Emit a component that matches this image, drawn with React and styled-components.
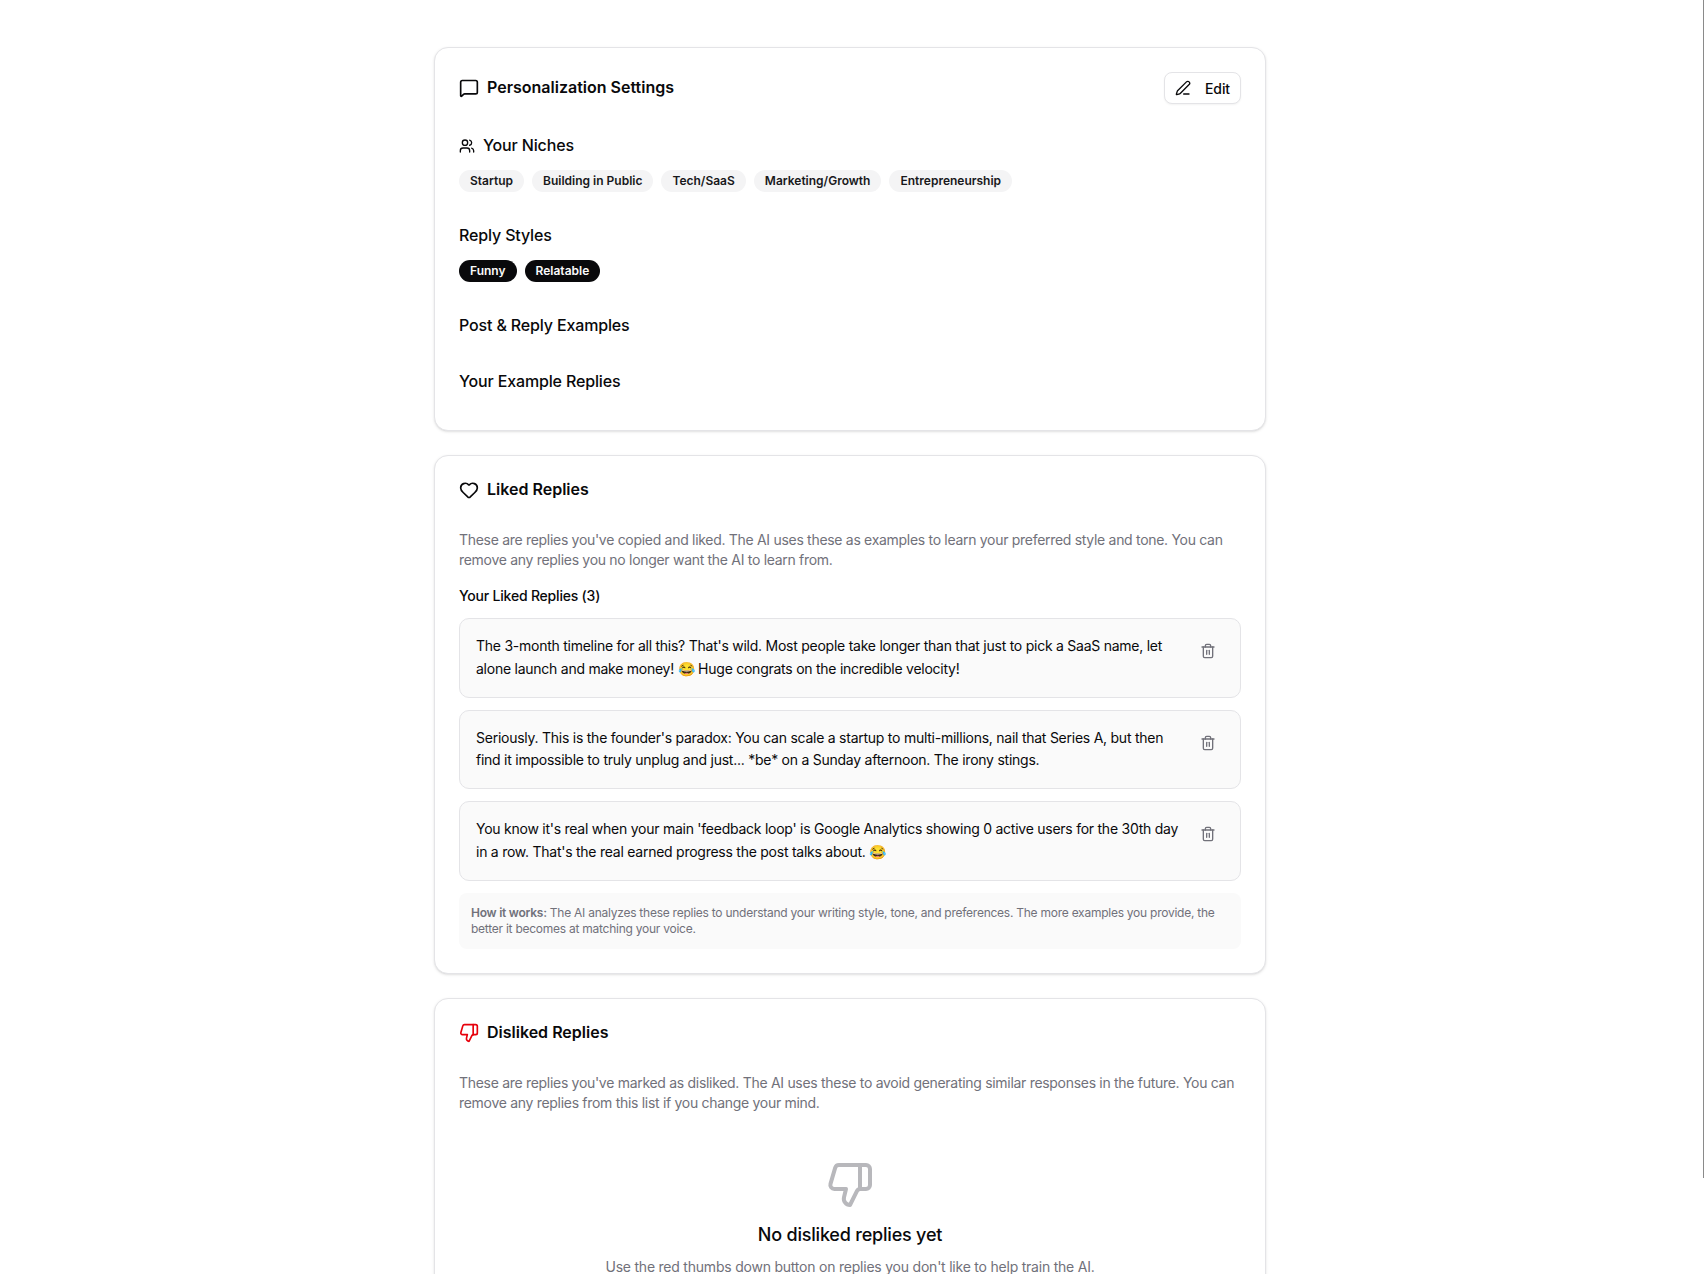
import React from 'react'
import styled, { createGlobalStyle } from 'styled-components'
import { MessageSquare, Users, PenLine, Heart, Trash2, ThumbsDown } from 'lucide-react'

const GlobalStyle = createGlobalStyle`
  html, body {
    margin: 0;
    padding: 0;
    background: #fff;
    height: 100%;
    overflow: hidden;
  }
  body {
    font-family: Inter, "Liberation Sans", sans-serif;
    color: #09090b;
  }
`

const Page = styled.div`
  width: 1700px;
  display: flex;
  flex-direction: column;
  align-items: center;
  gap: 24px;
  padding-top: 47px;
`

const ScrollThumb = styled.div`
  position: fixed;
  top: 0;
  right: 0;
  width: 1px;
  height: 1178px;
  background: #8a8a8a;
`

const Card = styled.section`
  box-sizing: border-box;
  width: 832px;
  padding: 24px;
  border: 1px solid #e4e4e7;
  border-radius: 14px;
  background: #fff;
  box-shadow: 0 1px 3px rgba(0, 0, 0, 0.1), 0 1px 2px -1px rgba(0, 0, 0, 0.1);
`

const CardHeader = styled.header`
  display: flex;
  align-items: center;
  justify-content: space-between;
  margin-bottom: 30px;
`

const CardTitle = styled.h2`
  display: flex;
  align-items: center;
  gap: 8px;
  margin: 0;
  font-size: 16px;
  line-height: 20px;
  font-weight: 600;

  span {
    line-height: 18px;
    padding-bottom: 2px;
  }
`

const EditButton = styled.button`
  display: flex;
  align-items: center;
  gap: 14px;
  box-sizing: border-box;
  width: 77px;
  height: 32px;
  padding: 0 10px;
  border: 1px solid #e4e4e7;
  border-radius: 8px;
  background: #fff;
  box-shadow: 0 1px 2px rgba(0, 0, 0, 0.05);
  color: #09090b;
  font: 500 14px Inter, sans-serif;
  letter-spacing: -0.1px;
`

const Section = styled.div`
  margin-top: ${p => p.$top || 0}px;
  margin-bottom: ${p => p.$bottom || 0}px;
`

const SectionLabel = styled.h3`
  display: flex;
  align-items: center;
  gap: 8px;
  margin: 0;
  font-size: 16px;
  line-height: 23px;
  padding-bottom: 1px;
  font-weight: 500;
  letter-spacing: -0.15px;
`

const Pills = styled.div`
  display: flex;
  gap: 8px;
  margin-top: 12px;
`

const Pill = styled.span`
  display: inline-flex;
  align-items: center;
  box-sizing: border-box;
  height: 22px;
  padding: 0 11px 2px;
  border-radius: 999px;
  background: ${p => (p.$dark ? '#09090b' : '#f4f4f5')};
  color: ${p => (p.$dark ? '#fafafa' : '#18181b')};
  font-size: 12px;
  font-weight: 600;
`

const Description = styled.p`
  margin: 0;
  font-size: 14px;
  line-height: 20px;
  letter-spacing: -0.3px;
  color: #71717a;
`

const EmptyHint = styled(Description)`
  letter-spacing: -0.22px;
`

const ListTitle = styled.h4`
  margin: 16px 0 12px;
  font-size: 14px;
  line-height: 20px;
  font-weight: 500;
  letter-spacing: -0.2px;
`

const ReplyList = styled.div`
  display: flex;
  flex-direction: column;
  gap: 12px;
`

const ReplyItem = styled.div`
  display: flex;
  align-items: flex-start;
  gap: 12px;
  padding: 16px;
  border: 1px solid #e4e4e7;
  border-radius: 10px;
  background: #fafafa;
`

const ReplyText = styled.p`
  flex: 1;
  margin: 0;
  font-size: 14px;
  line-height: 22.75px;
  letter-spacing: -0.25px;
`

const IconButton = styled.button`
  display: flex;
  flex: none;
  align-items: center;
  justify-content: center;
  width: 32px;
  height: 32px;
  padding: 0;
  border: 0;
  background: transparent;
  color: #71717a;
`

const HowItWorks = styled.p`
  margin: 12px 0 0;
  padding: 12px;
  border-radius: 8px;
  background: #fafafa;
  color: #71717a;
  font-size: 12px;
  line-height: 16px;
  letter-spacing: -0.25px;

  strong {
    font-weight: 600;
  }
`

const EmptyState = styled.div`
  display: flex;
  flex-direction: column;
  align-items: center;
  padding-top: 48px;
  text-align: center;
`

const EmptyIcon = styled(ThumbsDown)`
  color: #b8b8bc;
`

const EmptyTitle = styled.h3`
  margin: 12px 0 8px;
  font-size: 18px;
  line-height: 28px;
  font-weight: 500;
  letter-spacing: -0.2px;
`

const niches = ['Startup', 'Building in Public', 'Tech/SaaS', 'Marketing/Growth', 'Entrepreneurship']
const styles = ['Funny', 'Relatable']

const replies = [
  "The 3-month timeline for all this? That's wild. Most people take longer than that just to pick a SaaS name, let alone launch and make money! 😂 Huge congrats on the incredible velocity!",
  "Seriously. This is the founder's paradox: You can scale a startup to multi-millions, nail that Series A, but then find it impossible to truly unplug and just... *be* on a Sunday afternoon. The irony stings.",
  "You know it's real when your main 'feedback loop' is Google Analytics showing 0 active users for the 30th day in a row. That's the real earned progress the post talks about. 😂",
]

export default function App() {
  return (
    <>
      <GlobalStyle />
      <Page>
        <Card>
          <CardHeader>
            <CardTitle>
              <MessageSquare size={20} />
              <span>Personalization Settings</span>
            </CardTitle>
            <EditButton>
              <PenLine size={16} />
              Edit
            </EditButton>
          </CardHeader>
          <Section>
            <SectionLabel>
              <Users size={16} />
              Your Niches
            </SectionLabel>
            <Pills>
              {niches.map(n => (
                <Pill key={n}>{n}</Pill>
              ))}
            </Pills>
          </Section>
          <Section $top={32}>
            <SectionLabel>Reply Styles</SectionLabel>
            <Pills>
              {styles.map(s => (
                <Pill key={s} $dark>
                  {s}
                </Pill>
              ))}
            </Pills>
          </Section>
          <Section $top={32}>
            <SectionLabel>Post &amp; Reply Examples</SectionLabel>
          </Section>
          <Section $top={32} $bottom={12}>
            <SectionLabel>Your Example Replies</SectionLabel>
          </Section>
        </Card>

        <Card>
          <CardHeader>
            <CardTitle>
              <Heart size={20} />
              <span>Liked Replies</span>
            </CardTitle>
          </CardHeader>
          <Description>
            These are replies you've copied and liked. The AI uses these as examples to learn your preferred style and
            tone. You can remove any replies you no longer want the AI to learn from.
          </Description>
          <ListTitle>Your Liked Replies (3)</ListTitle>
          <ReplyList>
            {replies.map(r => (
              <ReplyItem key={r}>
                <ReplyText>{r}</ReplyText>
                <IconButton>
                  <Trash2 size={16} />
                </IconButton>
              </ReplyItem>
            ))}
          </ReplyList>
          <HowItWorks>
            <strong>How it works:</strong> The AI analyzes these replies to understand your writing style, tone, and
            preferences. The more examples you provide, the better it becomes at matching your voice.
          </HowItWorks>
        </Card>

        <Card>
          <CardHeader>
            <CardTitle>
              <ThumbsDown size={20} color="#e7000b" />
              <span>Disliked Replies</span>
            </CardTitle>
          </CardHeader>
          <Description>
            These are replies you've marked as disliked. The AI uses these to avoid generating similar responses in the
            future. You can remove any replies from this list if you change your mind.
          </Description>
          <EmptyState>
            <EmptyIcon size={48} />
            <EmptyTitle>No disliked replies yet</EmptyTitle>
            <EmptyHint>Use the red thumbs down button on replies you don't like to help train the AI.</EmptyHint>
          </EmptyState>
        </Card>
      </Page>
      <ScrollThumb />
    </>
  )
}
